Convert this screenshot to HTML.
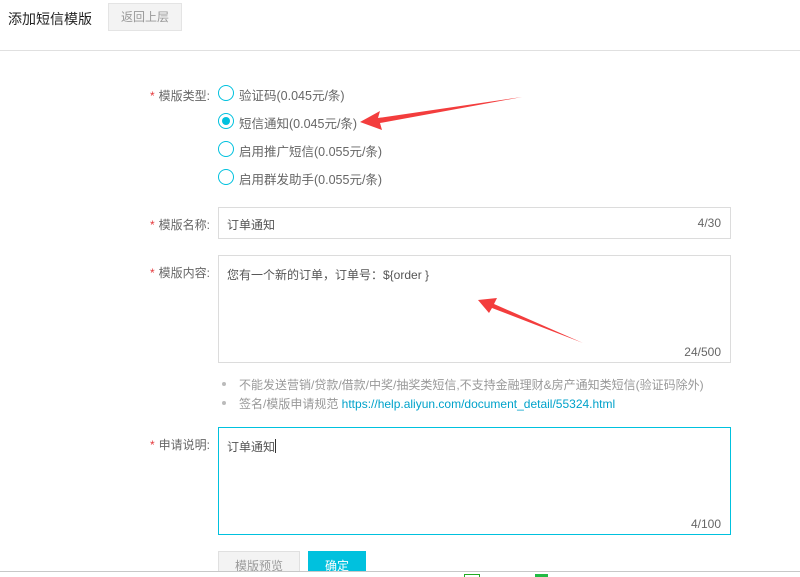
<!DOCTYPE html>
<html><head><meta charset="utf-8"><style>
*{margin:0;padding:0;box-sizing:border-box}
html,body{width:800px;height:577px;overflow:hidden}
body{background:#fff;position:relative;font-family:"Liberation Sans","Noto Sans CJK SC",sans-serif;font-size:12px;color:#333}
.a{position:absolute;white-space:nowrap}
.lbl{position:absolute;right:590px;color:#666;font-size:12px}
.lbl b{color:#e4393c;font-weight:normal;margin-right:4px}
.r{position:absolute;left:218px;width:16px;height:16px;border:1px solid #00c1de;border-radius:50%}
.r.on::after{content:"";position:absolute;left:3px;top:3px;width:8px;height:8px;border-radius:50%;background:#00c1de}
.rt{position:absolute;left:239px;color:#666;font-size:12.5px}
.box{position:absolute;left:218px;width:513px;border:1px solid #dcdcdc}
.cnt{position:absolute;right:9px;bottom:3px;color:#666;font-size:12px}
</style></head><body>
<div class="a" style="left:8px;top:9px;font-size:14px;color:#222">添加短信模版</div>
<div class="a" style="left:108px;top:3px;width:74px;height:28px;background:#f3f3f3;border:1px solid #e4e4e4;color:#999;text-align:center;line-height:26px">返回上层</div>
<div class="a" style="left:0;top:50px;width:800px;height:1px;background:#e0e0e0"></div>

<div class="lbl" style="top:87px"><b>*</b>模版类型:</div>
<div class="r" style="top:85px"></div><div class="rt" style="top:85px">验证码(0.045元/条)</div>
<div class="r on" style="top:113px"></div><div class="rt" style="top:113px">短信通知(0.045元/条)</div>
<div class="r" style="top:141px"></div><div class="rt" style="top:141px">启用推广短信(0.055元/条)</div>
<div class="r" style="top:169px"></div><div class="rt" style="top:169px">启用群发助手(0.055元/条)</div>

<div class="lbl" style="top:216px"><b>*</b>模版名称:</div>
<div class="box" style="top:207px;height:32px"><span class="a" style="left:8px;top:8px;color:#555">订单通知</span><span class="a" style="right:9px;top:8px;color:#666">4/30</span></div>

<div class="lbl" style="top:264px"><b>*</b>模版内容:</div>
<div class="box" style="top:255px;height:108px"><span class="a" style="left:8px;top:10px;color:#555">您有一个新的订单，订单号：${order }</span><span class="cnt">24/500</span></div>

<div class="a" style="left:222px;top:382px;width:4px;height:4px;border-radius:50%;background:#bbb"></div>
<div class="a" style="left:239px;top:376px;color:#999">不能发送营销/贷款/借款/中奖/抽奖类短信,不支持金融理财&amp;房产通知类短信(验证码除外)</div>
<div class="a" style="left:222px;top:401px;width:4px;height:4px;border-radius:50%;background:#bbb"></div>
<div class="a" style="left:239px;top:395px;color:#999">签名/模版申请规范 <span style="color:#00a2ca">https://help.aliyun.com/document_detail/55324.html</span></div>

<div class="lbl" style="top:436px"><b>*</b>申请说明:</div>
<div class="box" style="top:427px;height:108px;border-color:#00c1de"><span class="a" style="left:8px;top:10px;color:#555">订单通知<span style="display:inline-block;width:1px;height:14px;background:#333;vertical-align:-2px"></span></span><span class="cnt">4/100</span></div>

<div class="a" style="left:218px;top:551px;width:82px;height:30px;background:#f3f3f3;border:1px solid #e0e0e0;color:#999;text-align:center;line-height:28px">模版预览</div>
<div class="a" style="left:308px;top:551px;width:58px;height:30px;background:#00c1de;color:#fff;text-align:center;line-height:30px">确定</div>

<div class="a" style="left:0;top:571px;width:800px;height:30px;background:#fff;border-top:1px solid #c8c8c8;z-index:5"></div>
<div class="a" style="left:464px;top:574px;width:16px;height:4px;border:1px solid #2a2;border-bottom:none;z-index:6"></div>
<div class="a" style="left:535px;top:574px;width:13px;height:4px;background:#2b4;z-index:6"></div>

<svg class="a" style="left:0;top:0" width="800" height="577">
<polygon fill="#f33d3d" points="522,97 378,118 380,111 360,122 382,130 380,123"/>
<polygon fill="#f33d3d" points="583,343 494,304 497,298 478,300 489,313 492,308"/>
</svg>
</body></html>
